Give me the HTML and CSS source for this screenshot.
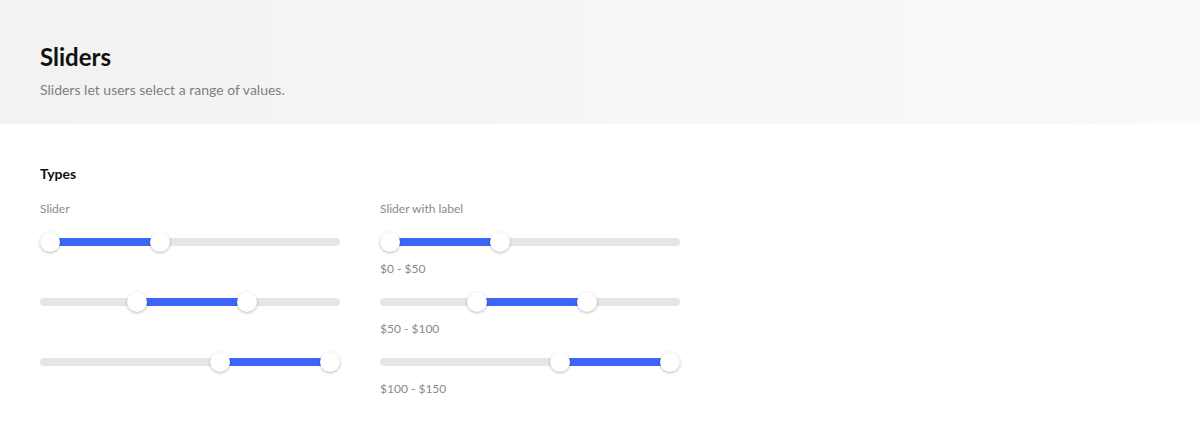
FILE: index.html
```html
<!DOCTYPE html>
<html>
<head>
<meta charset="utf-8">
<link rel="stylesheet" href="styles.css">
</head>
<body>
<header class="hero">
  <h1 class="hero-title">Sliders</h1>
  <p class="hero-sub">Sliders let users select a range of values.</p>
</header>
<main class="content">
  <h2 class="section-title">Types</h2>
  <div class="columns">
    <section class="col">
      <div class="col-label">Slider</div>
      <div class="rows">
        <div class="row">
          <div class="slider" style="--a:0px;--b:110px"><div class="track"></div><div class="fill"></div><span class="thumb thumb-a"></span><span class="thumb thumb-b"></span></div>
        </div>
        <div class="row">
          <div class="slider" style="--a:87px;--b:197px"><div class="track"></div><div class="fill"></div><span class="thumb thumb-a"></span><span class="thumb thumb-b"></span></div>
        </div>
        <div class="row">
          <div class="slider" style="--a:170px;--b:280px"><div class="track"></div><div class="fill"></div><span class="thumb thumb-a"></span><span class="thumb thumb-b"></span></div>
        </div>
      </div>
    </section>
    <section class="col">
      <div class="col-label">Slider with label</div>
      <div class="rows">
        <div class="row">
          <div class="slider" style="--a:0px;--b:110px"><div class="track"></div><div class="fill"></div><span class="thumb thumb-a"></span><span class="thumb thumb-b"></span></div>
          <div class="value">$0 - $50</div>
        </div>
        <div class="row">
          <div class="slider" style="--a:87px;--b:197px"><div class="track"></div><div class="fill"></div><span class="thumb thumb-a"></span><span class="thumb thumb-b"></span></div>
          <div class="value">$50 - $100</div>
        </div>
        <div class="row">
          <div class="slider" style="--a:170px;--b:280px"><div class="track"></div><div class="fill"></div><span class="thumb thumb-a"></span><span class="thumb thumb-b"></span></div>
          <div class="value">$100 - $150</div>
        </div>
      </div>
    </section>
  </div>
</main>
</body>
</html>
```

FILE: styles.css
```css
* { box-sizing: border-box; }
html, body { margin: 0; padding: 0; }
body {
  font-family: Lato, "Open Sans", sans-serif;
  background: #ffffff;
  color: #111;
  width: 1200px;
  height: 448px;
  overflow: hidden;
}
.hero {
  height: 124px;
  padding: 42px 40px 0;
  background: linear-gradient(to right, #f2f2f2, #fafafa);
}
.hero-title {
  margin: 0;
  font-size: 24px;
  line-height: 30px;
  font-weight: 700;
  color: #111;
}
.hero-sub {
  margin: 8px 0 0;
  font-size: 14px;
  line-height: 20px;
  color: #808080;
}
.content {
  padding: 40px 40px 0;
}
.section-title {
  margin: 0;
  font-size: 14px;
  line-height: 20px;
  font-weight: 700;
  color: #111;
}
.columns {
  display: flex;
  gap: 40px;
  margin-top: 17px;
}
.col {
  width: 300px;
}
.col-label {
  font-size: 12px;
  line-height: 16px;
  color: #8a8a8a;
}
.rows {
  margin-top: 15px;
  display: grid;
  grid-auto-rows: 60px;
}
.row {
  display: flex;
  flex-direction: column;
}
.slider {
  position: relative;
  width: 300px;
  height: 20px;
}
.track {
  position: absolute;
  left: 0;
  right: 0;
  top: 6px;
  height: 8px;
  border-radius: 4px;
  background: #e5e5e5;
}
.fill {
  position: absolute;
  top: 6px;
  height: 8px;
  left: calc(var(--a) + 10px);
  width: calc(var(--b) - var(--a));
  background: #3d66f6;
}
.thumb {
  position: absolute;
  top: 0;
  width: 20px;
  height: 20px;
  border-radius: 50%;
  background: #fff;
  box-shadow: 0 1px 3px rgba(0, 0, 0, 0.28);
}
.thumb-a { left: var(--a); }
.thumb-b { left: var(--b); }
.value {
  margin-top: 9px;
  font-size: 12px;
  line-height: 16px;
  color: #8a8a8a;
}
```
